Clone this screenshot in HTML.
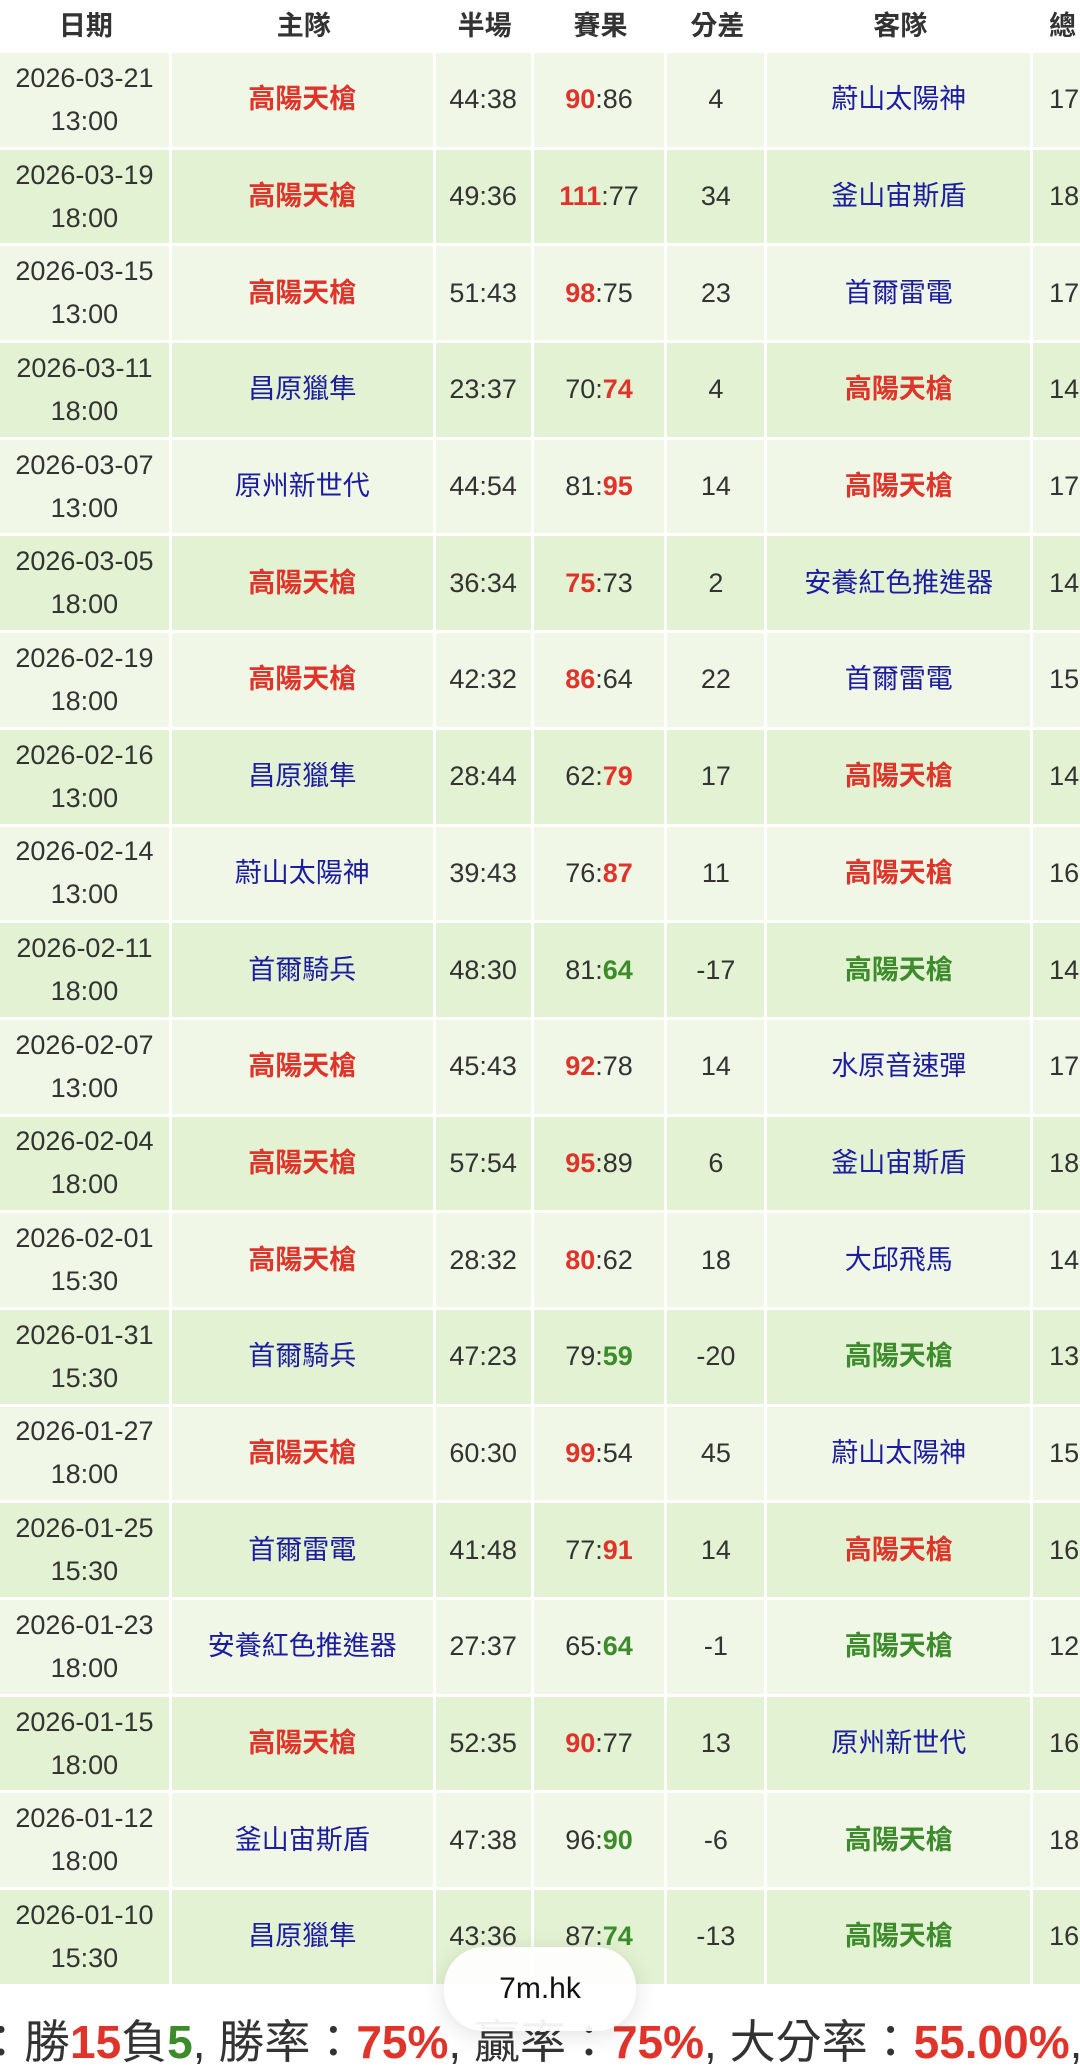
<!DOCTYPE html>
<html><head><meta charset="utf-8"><style>
*{margin:0;padding:0;box-sizing:border-box}
body{width:1080px;height:2070px;overflow:hidden;background:#fff;font-family:"Liberation Sans","Noto Sans CJK TC",sans-serif;color:#333;position:relative}
.tbl{position:absolute;left:0;top:0;width:1200px}
.row{width:1200px;height:96.7px;display:flex}
.row.h{height:53px}
.c{display:flex;align-items:center;justify-content:center;text-align:center;font-size:27px;border-right:3px solid #fff;border-bottom:3px solid #fff;line-height:43px}
.h .c{font-weight:bold;font-size:27px;color:#333;border:none}
.w1{width:172px}.w2{width:264px}.w3{width:98px}.w4{width:134px}.w5{width:100px}.w6{width:266px}.w7{width:167px;justify-content:flex-start;padding-left:16px}
.h .w7{padding-left:16px}
.o .c{background:#f0f7e6}.e .c{background:#e2f2d2}
.r{color:#e0342b;font-weight:bold}.b{color:#1c1ca0}.g{color:#3c8c2c;font-weight:bold}
.sum{position:absolute;left:-22px;top:2006px;font-size:46px;white-space:nowrap;color:#333}
.pill{position:absolute;left:444px;top:1947px;width:192px;height:84px;border-radius:40px;background:rgba(255,255,255,0.93);box-shadow:0 4px 24px rgba(0,0,0,0.12);display:flex;align-items:center;justify-content:center;font-size:30px;color:#111}
</style></head><body>
<div class="tbl">
<div class="row h"><div class="c w1">日期</div><div class="c w2">主隊</div><div class="c w3">半場</div><div class="c w4">賽果</div><div class="c w5">分差</div><div class="c w6">客隊</div><div class="c w7">總</div></div>
<div class="row o"><div class="c w1">2026-03-21<br>13:00</div><div class="c w2 r">高陽天槍</div><div class="c w3">44:38</div><div class="c w4"><span class="r">90</span>:86</div><div class="c w5">4</div><div class="c w6 b">蔚山太陽神</div><div class="c w7">17</div></div>
<div class="row e"><div class="c w1">2026-03-19<br>18:00</div><div class="c w2 r">高陽天槍</div><div class="c w3">49:36</div><div class="c w4"><span class="r">111</span>:77</div><div class="c w5">34</div><div class="c w6 b">釜山宙斯盾</div><div class="c w7">18</div></div>
<div class="row o"><div class="c w1">2026-03-15<br>13:00</div><div class="c w2 r">高陽天槍</div><div class="c w3">51:43</div><div class="c w4"><span class="r">98</span>:75</div><div class="c w5">23</div><div class="c w6 b">首爾雷電</div><div class="c w7">17</div></div>
<div class="row e"><div class="c w1">2026-03-11<br>18:00</div><div class="c w2 b">昌原獵隼</div><div class="c w3">23:37</div><div class="c w4">70:<span class="r">74</span></div><div class="c w5">4</div><div class="c w6 r">高陽天槍</div><div class="c w7">14</div></div>
<div class="row o"><div class="c w1">2026-03-07<br>13:00</div><div class="c w2 b">原州新世代</div><div class="c w3">44:54</div><div class="c w4">81:<span class="r">95</span></div><div class="c w5">14</div><div class="c w6 r">高陽天槍</div><div class="c w7">17</div></div>
<div class="row e"><div class="c w1">2026-03-05<br>18:00</div><div class="c w2 r">高陽天槍</div><div class="c w3">36:34</div><div class="c w4"><span class="r">75</span>:73</div><div class="c w5">2</div><div class="c w6 b">安養紅色推進器</div><div class="c w7">14</div></div>
<div class="row o"><div class="c w1">2026-02-19<br>18:00</div><div class="c w2 r">高陽天槍</div><div class="c w3">42:32</div><div class="c w4"><span class="r">86</span>:64</div><div class="c w5">22</div><div class="c w6 b">首爾雷電</div><div class="c w7">15</div></div>
<div class="row e"><div class="c w1">2026-02-16<br>13:00</div><div class="c w2 b">昌原獵隼</div><div class="c w3">28:44</div><div class="c w4">62:<span class="r">79</span></div><div class="c w5">17</div><div class="c w6 r">高陽天槍</div><div class="c w7">14</div></div>
<div class="row o"><div class="c w1">2026-02-14<br>13:00</div><div class="c w2 b">蔚山太陽神</div><div class="c w3">39:43</div><div class="c w4">76:<span class="r">87</span></div><div class="c w5">11</div><div class="c w6 r">高陽天槍</div><div class="c w7">16</div></div>
<div class="row e"><div class="c w1">2026-02-11<br>18:00</div><div class="c w2 b">首爾騎兵</div><div class="c w3">48:30</div><div class="c w4">81:<span class="g">64</span></div><div class="c w5">-17</div><div class="c w6 g">高陽天槍</div><div class="c w7">14</div></div>
<div class="row o"><div class="c w1">2026-02-07<br>13:00</div><div class="c w2 r">高陽天槍</div><div class="c w3">45:43</div><div class="c w4"><span class="r">92</span>:78</div><div class="c w5">14</div><div class="c w6 b">水原音速彈</div><div class="c w7">17</div></div>
<div class="row e"><div class="c w1">2026-02-04<br>18:00</div><div class="c w2 r">高陽天槍</div><div class="c w3">57:54</div><div class="c w4"><span class="r">95</span>:89</div><div class="c w5">6</div><div class="c w6 b">釜山宙斯盾</div><div class="c w7">18</div></div>
<div class="row o"><div class="c w1">2026-02-01<br>15:30</div><div class="c w2 r">高陽天槍</div><div class="c w3">28:32</div><div class="c w4"><span class="r">80</span>:62</div><div class="c w5">18</div><div class="c w6 b">大邱飛馬</div><div class="c w7">14</div></div>
<div class="row e"><div class="c w1">2026-01-31<br>15:30</div><div class="c w2 b">首爾騎兵</div><div class="c w3">47:23</div><div class="c w4">79:<span class="g">59</span></div><div class="c w5">-20</div><div class="c w6 g">高陽天槍</div><div class="c w7">13</div></div>
<div class="row o"><div class="c w1">2026-01-27<br>18:00</div><div class="c w2 r">高陽天槍</div><div class="c w3">60:30</div><div class="c w4"><span class="r">99</span>:54</div><div class="c w5">45</div><div class="c w6 b">蔚山太陽神</div><div class="c w7">15</div></div>
<div class="row e"><div class="c w1">2026-01-25<br>15:30</div><div class="c w2 b">首爾雷電</div><div class="c w3">41:48</div><div class="c w4">77:<span class="r">91</span></div><div class="c w5">14</div><div class="c w6 r">高陽天槍</div><div class="c w7">16</div></div>
<div class="row o"><div class="c w1">2026-01-23<br>18:00</div><div class="c w2 b">安養紅色推進器</div><div class="c w3">27:37</div><div class="c w4">65:<span class="g">64</span></div><div class="c w5">-1</div><div class="c w6 g">高陽天槍</div><div class="c w7">12</div></div>
<div class="row e"><div class="c w1">2026-01-15<br>18:00</div><div class="c w2 r">高陽天槍</div><div class="c w3">52:35</div><div class="c w4"><span class="r">90</span>:77</div><div class="c w5">13</div><div class="c w6 b">原州新世代</div><div class="c w7">16</div></div>
<div class="row o"><div class="c w1">2026-01-12<br>18:00</div><div class="c w2 b">釜山宙斯盾</div><div class="c w3">47:38</div><div class="c w4">96:<span class="g">90</span></div><div class="c w5">-6</div><div class="c w6 g">高陽天槍</div><div class="c w7">18</div></div>
<div class="row e"><div class="c w1">2026-01-10<br>15:30</div><div class="c w2 b">昌原獵隼</div><div class="c w3">43:36</div><div class="c w4">87:<span class="g">74</span></div><div class="c w5">-13</div><div class="c w6 g">高陽天槍</div><div class="c w7">16</div></div>
</div>
<div class="sum">：勝<span class="r">15</span>負<span class="g">5</span>, 勝率：<span class="r">75%</span>, 贏率：<span class="r">75%</span>, 大分率：<span class="r">55.00%</span>, 單</div>
<div class="pill">7m.hk</div>
</body></html>
